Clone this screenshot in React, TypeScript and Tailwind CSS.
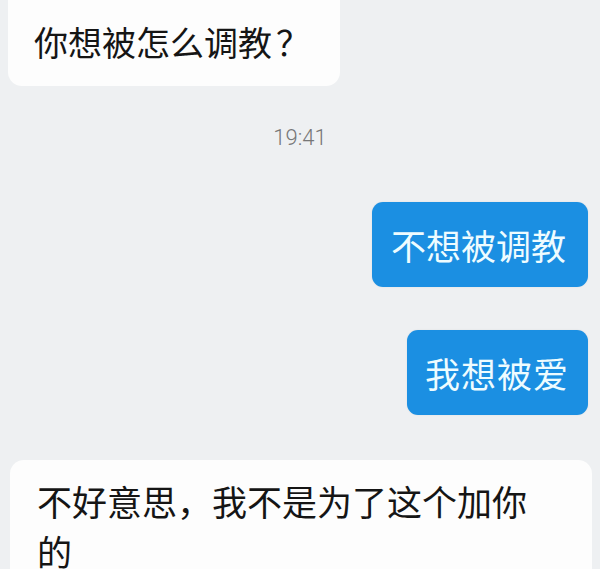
const font = { fontFamily: '"Noto Sans CJK SC", "Noto Sans", sans-serif' };

const BlueBubble = ({ text, className }: { text: string; className: string }) => (
  <div
    className={`self-end mr-3 rounded-[11px] bg-[#1b8fe2] text-[#eefcff] text-[35px] leading-[41px] py-[22px] shadow-[0_0_2px_rgba(0,0,0,0.08)] ${className}`}
  >
    {text}
  </div>
);

const App = () => {
  return (
    <div className="w-[600px] h-[569px] overflow-hidden bg-[#eef0f2] flex flex-col" style={font}>
      <div className="ml-2 w-[332px] rounded-b-[14px] bg-[#fdfdfd] pl-[26px] pt-[23px] pb-[25px] text-[34px] leading-[38px] text-[#151515]">
        你想被怎么调教<span className="ml-[4px]">？</span>
      </div>

      <div
        className="mt-[37px] text-center text-[22px] leading-[30px] font-light text-[#777777]"
        style={{ fontFamily: 'Roboto, "Noto Sans", sans-serif' }}
      >
        19:41
      </div>

      <BlueBubble text="不想被调教" className="mt-[49px] w-[216px] pl-[19px]" />
      <BlueBubble text="我想被爱" className="mt-[43px] w-[181px] pl-[18px] tracking-[1px]" />

      <div className="mt-[45px] ml-[10px] w-[582px] flex-1 rounded-t-[14px] bg-[#fdfdfd] pl-[27px] pt-[16px] text-[35px] leading-[50px] text-[#151515]">
        <div className="w-[500px]">不好意思，我不是为了这个加你的</div>
      </div>
    </div>
  );
};

export default App;
